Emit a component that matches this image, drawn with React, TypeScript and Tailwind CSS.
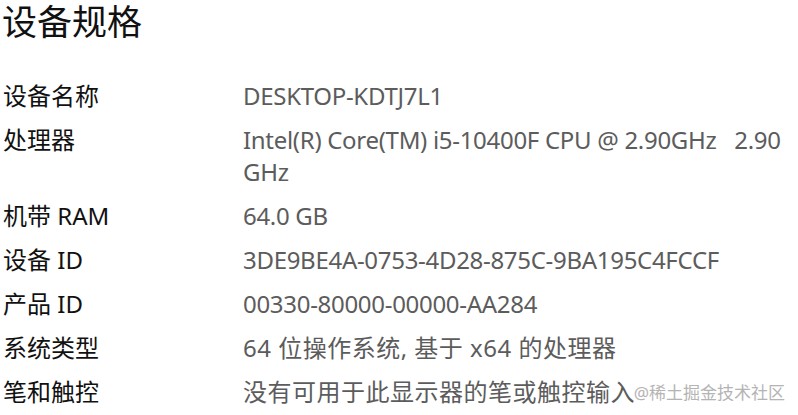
const specs: { label: string; value: string; cjk?: boolean }[] = [
  { label: "设备名称", value: "DESKTOP-KDTJ7L1" },
  { label: "处理器", value: "Intel(R) Core(TM) i5-10400F CPU @ 2.90GHz   2.90 GHz" },
  { label: "机带 RAM", value: "64.0 GB" },
  { label: "设备 ID", value: "3DE9BE4A-0753-4D28-875C-9BA195C4FCCF" },
  { label: "产品 ID", value: "00330-80000-00000-AA284" },
  { label: "系统类型", value: "64 位操作系统, 基于 x64 的处理器", cjk: true },
  { label: "笔和触控", value: "没有可用于此显示器的笔或触控输入", cjk: true },
];

export default function App() {
  return (
    <div
      className="relative w-[798px] h-[415px] overflow-hidden bg-white"
      style={{ fontFamily: '"Noto Sans", "Noto Sans CJK SC", sans-serif' }}
    >
      <h1 className="pl-[2px] pt-[1px] text-[35px] leading-[42px] text-[#111]">设备规格</h1>

      <div className="mt-[37px] flex flex-col gap-[12px]">
        {specs.map((s) => (
          <div key={s.label} className="flex leading-[32px]">
            <div className="w-[243px] shrink-0 pl-[3px] text-[24px] text-[#111]">{s.label}</div>
            <div
              className={
                s.cjk
                  ? "w-[548px] whitespace-pre-wrap text-[24px] tracking-[0.5px] text-[#5c5c5c]"
                  : "w-[548px] whitespace-pre-wrap text-[24px] tracking-[-0.3px] text-[#5c5c5c]"
              }
            >
              {s.value}
            </div>
          </div>
        ))}
      </div>

      <div className="absolute right-[13px] bottom-[11px] text-[17px] leading-[22px] text-[#b4b4b4] [text-shadow:0_0_2px_#fff]">
        @稀土掘金技术社区
      </div>
    </div>
  );
}
